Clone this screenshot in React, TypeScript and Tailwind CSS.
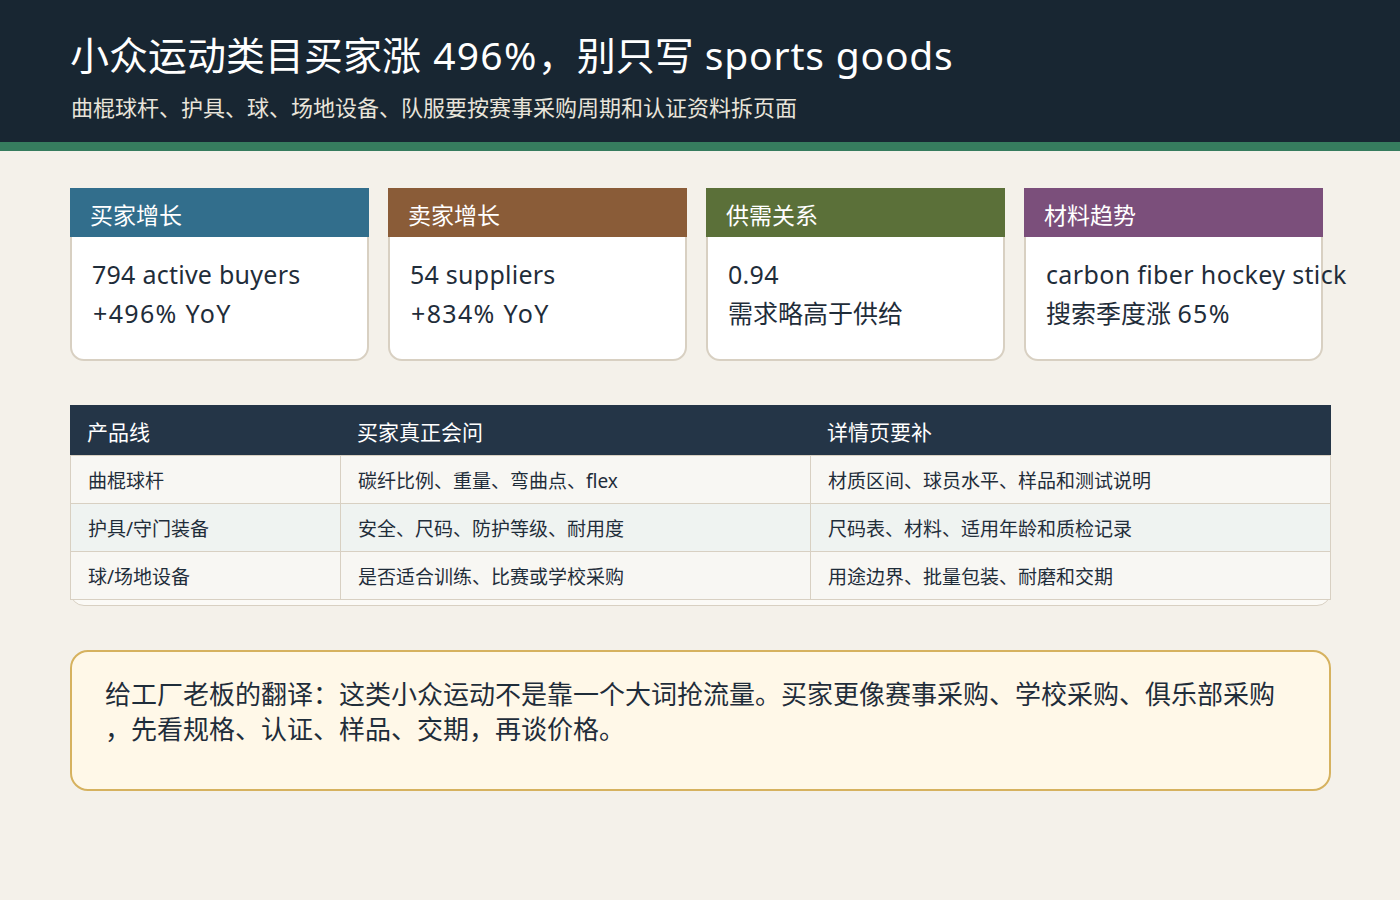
const cards = [
  { h: "买家增长", c: "bg-[#326e8c]", a: <span className="tracking-[0.25px]">794 active buyers</span>, b: <span className="tracking-[1.35px] ml-[1px]">+496% YoY</span> },
  { h: "卖家增长", c: "bg-[#8a5c38]", a: <span className="tracking-[0.25px]">54 suppliers</span>, b: <span className="tracking-[1.35px] ml-[1px]">+834% YoY</span> },
  { h: "供需关系", c: "bg-[#5b7039]", a: <span className="tracking-[0.3px]">0.94</span>, b: "需求略高于供给" },
  { h: "材料趋势", c: "bg-[#7b4f7b]", a: <span className="tracking-[0.36px]">carbon fiber hockey stick</span>, b: <>搜索季度涨 <span className="tracking-[1.3px]">65%</span></> },
];
const rows = [
  ["曲棍球杆", "碳纤比例、重量、弯曲点、flex", "材质区间、球员水平、样品和测试说明"],
  ["护具/守门装备", "安全、尺码、防护等级、耐用度", "尺码表、材料、适用年龄和质检记录"],
  ["球/场地设备", "是否适合训练、比赛或学校采购", "用途边界、批量包装、耐磨和交期"],
];
export default function App() {
  return (
    <div className="w-[1400px] h-[900px] overflow-hidden bg-[#f4f1ea] text-[#1f2d3a] font-['Noto_Sans','Noto_Sans_CJK_SC',sans-serif]">
      <header className="h-[151px] bg-[#182632] border-b-[9px] border-[#367c5e] pl-[70px] pt-[27px]">
        <h1 className="text-[39px] leading-[56px] font-normal text-white whitespace-nowrap">小众运动类目买家涨 <span className="tracking-[1.3px] ml-[2px]">496%</span>，别只写 <span className="tracking-[0.8px] ml-[1px]">sports goods</span></h1>
        <p className="text-[22px] leading-[30px] mt-[9px] ml-[1px] text-[#e8e4da]">曲棍球杆、护具、球、场地设备、队服要按赛事采购周期和认证资料拆页面</p>
      </header>
      <section className="mt-[37px] ml-[70px] flex gap-[19px]">
        {cards.map((c) => (
          <div key={c.h} className="w-[299px] h-[173px] bg-white border-2 border-[#d8d0c2] rounded-[14px]">
            <div className={`${c.c} -mx-[2px] -mt-[2px] h-[49px] pl-[20px] pt-[12px] text-[23px] leading-[31px] text-white`}>{c.h}</div>
            <div className="pl-[20px] pt-[18px] text-[25px] leading-[39px] whitespace-nowrap">
              <div>{c.a}</div>
              <div>{c.b}</div>
            </div>
          </div>
        ))}
      </section>
      <section className="mt-[44px] ml-[70px] w-[1261px] h-[201px] rounded-[14px] border border-[#d8d0c2] bg-[#fbfaf6]">
        <div className="-m-px">
          <div className="grid grid-cols-[271px_470px_520px] bg-[#243547] text-white text-[21px] h-[50px] pt-[6px] items-center">
            <div className="pl-[17px]">产品线</div>
            <div className="pl-[16px]">买家真正会问</div>
            <div className="pl-[16px]">详情页要补</div>
          </div>
          {rows.map((r, i) => (
            <div key={r[0]} className={`grid grid-cols-[271px_470px_520px] ${i === 0 ? "h-[49px] border-t" : "h-[48px]"} border-b border-[#d8d0c2] text-[19px] ${i === 1 ? "bg-[#eff3f1]" : "bg-[#f8f7f3]"}`}>
              <div className="pl-[17px] pt-[4px] flex items-center border-l border-r border-[#d8d0c2]">{r[0]}</div>
              <div className="pl-[17px] pt-[4px] flex items-center border-r border-[#d8d0c2]">{r[1]}</div>
              <div className="pl-[17px] pt-[4px] flex items-center border-r border-[#d8d0c2]">{r[2]}</div>
            </div>
          ))}
        </div>
      </section>
      <section className="mt-[44px] ml-[70px] w-[1261px] h-[141px] bg-[#fff8e8] border-2 border-[#d6b25f] rounded-[18px] px-[33px] pt-[25px] text-[26px] leading-[35px] [line-break:anywhere]">
        给工厂老板的翻译：这类小众运动不是靠一个大词抢流量。买家更像赛事采购、学校采购、俱乐部采购，先看规格、认证、样品、交期，再谈价格。
      </section>
    </div>
  );
}
